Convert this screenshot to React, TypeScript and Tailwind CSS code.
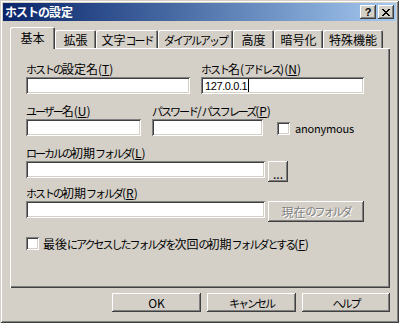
import { ReactElement } from "react";

// classic win2000 bevels
const raised = "bg-[#d4d0c8] shadow-[inset_-1px_-1px_0_#404040,inset_1px_1px_0_#ffffff,inset_-2px_-2px_0_#808080,inset_2px_2px_0_#d4d0c8]";
const sunken = "bg-white shadow-[inset_1px_1px_0_#808080,inset_-1px_-1px_0_#ffffff,inset_2px_2px_0_#404040,inset_-2px_-2px_0_#d4d0c8]";
const tabEdge = "shadow-[inset_1px_1px_0_#ffffff,inset_-1px_0_0_#404040,inset_-2px_0_0_#808080]";

// MS UI Gothic has narrow proportional kana, Noto doesn't -> squeeze kana runs
const KANA = /([\u3040-\u30ff]+)/;
const Jp = ({ t, k = "text-[11px] tracking-[-2px]" }: { t: string; k?: string }): ReactElement => (
  <>
    {t.split(KANA).map((s, i) => (i % 2 === 1 ? <span key={i} className={k}>{s}</span> : s))}
  </>
);

const tabs = [
  { label: "拡張", w: "w-[41px]" },
  { label: "文字コード", w: "w-[62px]" },
  { label: "ダイアルアップ", w: "w-[75px]" },
  { label: "高度", w: "w-[41px]" },
  { label: "暗号化", w: "w-[49px]" },
  { label: "特殊機能", w: "w-[60px]" },
];

const Label = ({ text, k }: { text: string; k: string }): ReactElement => (
  <div className="h-[12px] leading-[12px] whitespace-nowrap">
    <Jp t={text} />(<span className="underline underline-offset-1">{k}</span>)
  </div>
);

const CloseGlyph = (): ReactElement => (
  <svg width="8" height="7" viewBox="0 0 8 7" shapeRendering="crispEdges">
    <path d="M0 0h2v1H0zM6 0h2v1H6zM1 1h2v1H1zM5 1h2v1H5zM2 2h4v1H2zM3 3h2v1H3zM2 4h4v1H2zM1 5h2v1H1zM5 5h2v1H5zM0 6h2v1H0zM6 6h2v1H6z" fill="#000" />
  </svg>
);

const App = (): ReactElement => {
  return (
    <div className="w-[399px] h-[323px] bg-[#d4d0c8] p-[3px] text-[12px] text-black font-['Noto_Sans_CJK_JP',sans-serif] shadow-[inset_1px_1px_0_#d4d0c8,inset_-1px_-1px_0_#404040,inset_2px_2px_0_#ffffff,inset_-2px_-2px_0_#808080]">
      {/* title bar */}
      <div className="h-[18px] flex items-center justify-between bg-linear-to-r from-[#0a246a] to-[#a6caf0]">
        <span className="pl-[2px] text-white font-bold leading-[18px]">
          <Jp t="ホストの設定" k="text-[12px] tracking-[-1px]" />
        </span>
        <div className="flex gap-[2px] mr-[2px]">
          <div className={`w-[16px] h-[14px] flex items-center justify-center ${raised}`}>
            <span className="font-['Liberation_Sans',sans-serif] font-bold text-[11px] leading-[11px]">?</span>
          </div>
          <div className={`w-[16px] h-[14px] flex items-center justify-center ${raised}`}>
            <CloseGlyph />
          </div>
        </div>
      </div>

      {/* tabs */}
      <div className="flex items-end h-[21px] mt-[6px] ml-[7px]">
        <div className={`relative z-10 shrink-0 w-[45px] h-[22px] mb-[-1px] bg-[#d4d0c8] rounded-t-[2px] flex items-center justify-center ${tabEdge}`}>
          基本
        </div>
        {tabs.map((t) => (
          <div key={t.label} className={`${t.w} shrink-0 h-[18px] pt-[2px] rounded-t-[2px] flex items-center justify-center whitespace-nowrap ${tabEdge}`}>
            <Jp t={t.label} />
          </div>
        ))}
      </div>

      {/* tab panel */}
      <div className="ml-[7px] w-[380px] h-[240px] pt-[15px] pl-[16px] shadow-[inset_1px_1px_0_#ffffff,inset_-1px_-1px_0_#404040,inset_-2px_-2px_0_#808080]">
        <div className="flex">
          <div className="w-[164px]">
            <Label text="ホストの設定名" k="T" />
            <div className={`mt-[2px] h-[17px] ${sunken}`} />
          </div>
          <div className="w-[163px] ml-[11px]">
            <Label text="ホスト名(アドレス)" k="N" />
            <div className={`mt-[2px] h-[17px] flex items-center pl-[4px] ${sunken}`}>
              <span className="font-['Liberation_Sans',sans-serif] text-[11px] leading-[12px] tracking-[-0.4px]">127.0.0.1</span>
              <span className="w-[1px] h-[13px] bg-black ml-[1px]" />
            </div>
          </div>
        </div>

        <div className="flex mt-[11px]">
          <div className="w-[115px]">
            <Label text="ユーザー名" k="U" />
            <div className={`mt-[2px] h-[17px] ${sunken}`} />
          </div>
          <div className="w-[111px] ml-[11px]">
            <Label text="パスワード/パスフレーズ" k="P" />
            <div className={`mt-[2px] h-[17px] ${sunken}`} />
          </div>
          <div className="flex items-center self-end ml-[14px] h-[14px] mb-[1px]">
            <div className={`w-[13px] h-[13px] ${sunken}`} />
            <span className="ml-[5px] text-[11px] leading-[12px] tracking-[-0.2px]">anonymous</span>
          </div>
        </div>

        <div className="mt-[11px]">
          <Label text="ローカルの初期フォルダ" k="L" />
          <div className="flex items-start mt-[2px]">
            <div className={`w-[239px] h-[17px] ${sunken}`} />
            <div className={`ml-[3px] w-[20px] h-[21px] flex items-end justify-center pb-[3px] leading-[10px] ${raised}`}>...</div>
          </div>
        </div>

        <div className="mt-[5px]">
          <Label text="ホストの初期フォルダ" k="R" />
          <div className="flex items-start mt-[2px]">
            <div className={`w-[239px] h-[17px] ${sunken}`} />
            <div className={`ml-[3px] w-[96px] h-[21px] flex items-center justify-center text-[#808080] [text-shadow:1px_1px_0_#ffffff] ${raised}`}>
              <Jp t="現在のフォルダ" />
            </div>
          </div>
        </div>

        <div className="flex items-center mt-[15px]">
          <div className={`w-[13px] h-[13px] ${sunken}`} />
          <span className="ml-[4px] leading-[12px] whitespace-nowrap">
            <Jp t="最後にアクセスしたフォルダを次回の初期フォルダとする" />(<span className="underline underline-offset-1">F</span>)
          </span>
        </div>
      </div>

      {/* dialog buttons */}
      <div className="flex justify-end gap-[6px] mt-[5px] mr-[6px]">
        <button className={`w-[89px] h-[19px] ${raised}`}>OK</button>
        <button className={`w-[89px] h-[19px] ${raised}`}><Jp t="キャンセル" /></button>
        <button className={`w-[88px] h-[19px] ${raised}`}><Jp t="ヘルプ" /></button>
      </div>
    </div>
  );
};

export default App;
